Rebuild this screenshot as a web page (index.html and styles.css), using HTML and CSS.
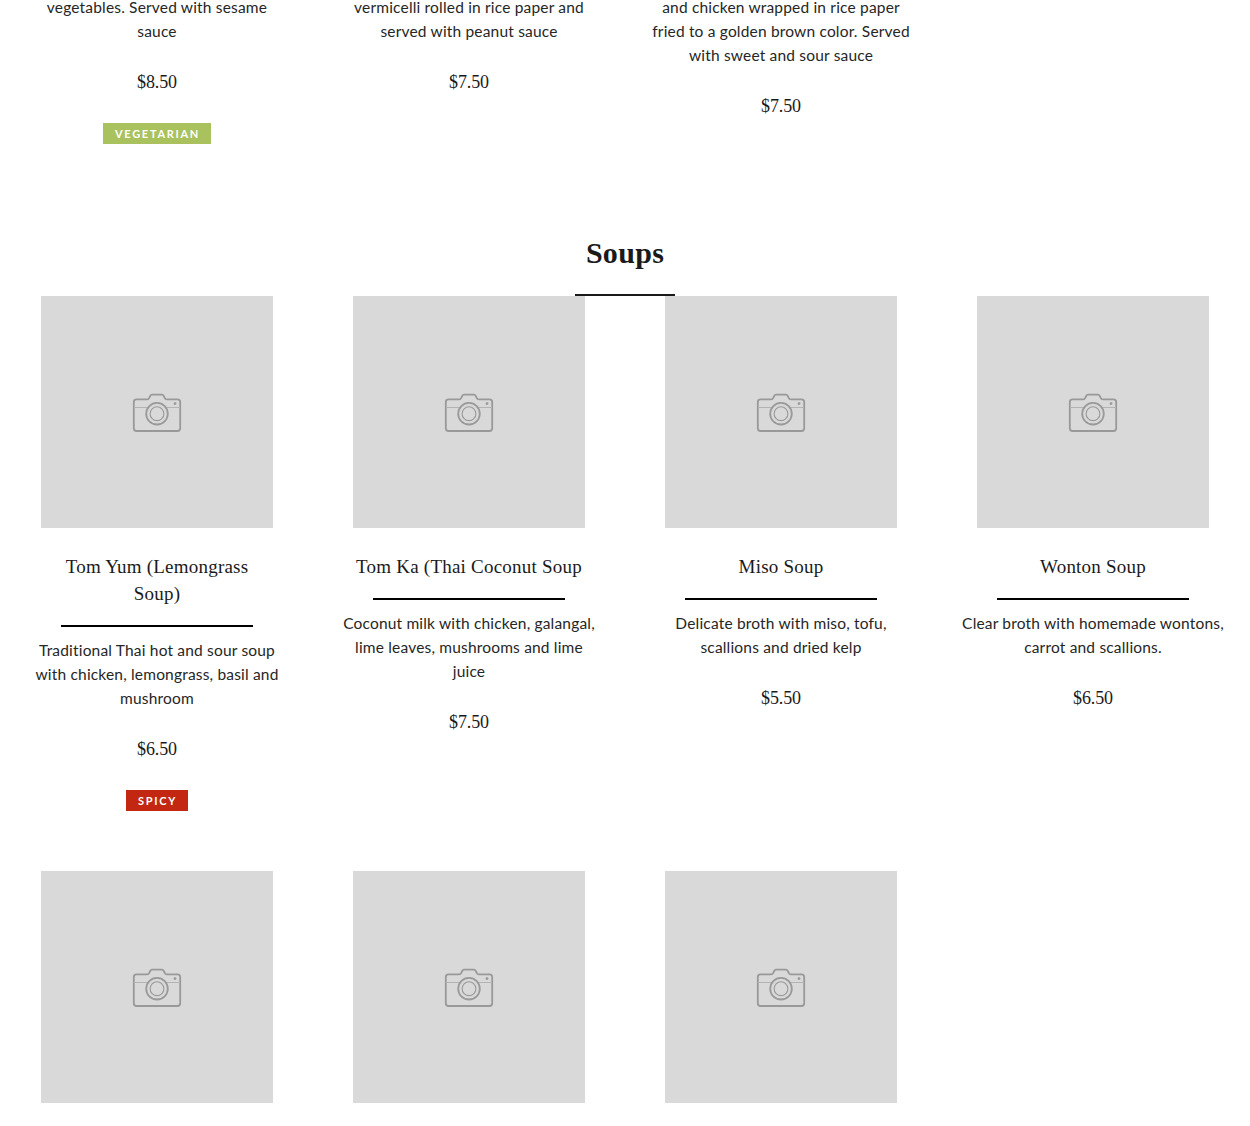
FILE: index.html
```
<!DOCTYPE html>
<html lang="en">

<head>
    <meta charset="UTF-8">
    <meta name="viewport" content="width=device-width, initial-scale=1.0">
    <title>Menu</title>
    <link rel="stylesheet" href="styles.css">
</head>

<body>
    <!-- camera placeholder, reused by every item without a photo -->
    <svg class="sprite" width="0" height="0">
        <symbol id="camera" viewBox="0 0 50 40">
            <g fill="none" stroke="#999">
                <path stroke-width="1.8" stroke-linejoin="round" d="M4.5 6.4H15.2Q16.6 6.4 17.2 5L18.3 2.8Q18.9 1.7 20 1.7H30Q31.1 1.7 31.7 2.8L32.8 5Q33.4 6.4 34.8 6.4H45.5Q48.2 6.4 48.2 9.1V35.3Q48.2 38 45.5 38H4.5Q1.8 38 1.8 35.3V9.1Q1.8 6.4 4.5 6.4Z" />
                <path stroke="#b3b3b3" d="M2 14.5H16.5M33.5 14.5H48" />
                <circle cx="25" cy="20.7" r="10.8" stroke-width="1.8" />
                <circle cx="25" cy="20.7" r="6.9" stroke-width="1.1" />
            </g>
            <circle cx="43" cy="10.6" r="1.4" fill="#999" />
        </symbol>
    </svg>

    <div class="menu">
        <div class="row first">
            <div class="item">
                <p class="desc">vegetables. Served with sesame<br>sauce</p>
                <div class="price">$8.50</div>
                <span class="tag vegetarian">VEGETARIAN</span>
            </div>
            <div class="item">
                <p class="desc">vermicelli rolled in rice paper and<br>served with peanut sauce</p>
                <div class="price">$7.50</div>
            </div>
            <div class="item">
                <p class="desc">and chicken wrapped in rice paper<br>fried to a golden brown color. Served<br>with sweet and sour sauce</p>
                <div class="price">$7.50</div>
            </div>
        </div>

        <h2 class="heading">Soups</h2>

        <div class="row">
            <div class="item">
                <div class="photo"><svg class="camera"><use href="#camera" /></svg></div>
                <h3 class="name">Tom Yum (Lemongrass<br>Soup)</h3>
                <p class="desc">Traditional Thai hot and sour soup<br>with chicken, lemongrass, basil and<br>mushroom</p>
                <div class="price">$6.50</div>
                <span class="tag spicy">SPICY</span>
            </div>
            <div class="item">
                <div class="photo"><svg class="camera"><use href="#camera" /></svg></div>
                <h3 class="name">Tom Ka (Thai Coconut Soup</h3>
                <p class="desc">Coconut milk with chicken, galangal,<br>lime leaves, mushrooms and lime<br>juice</p>
                <div class="price">$7.50</div>
            </div>
            <div class="item">
                <div class="photo"><svg class="camera"><use href="#camera" /></svg></div>
                <h3 class="name">Miso Soup</h3>
                <p class="desc">Delicate broth with miso, tofu,<br>scallions and dried kelp</p>
                <div class="price">$5.50</div>
            </div>
            <div class="item">
                <div class="photo"><svg class="camera"><use href="#camera" /></svg></div>
                <h3 class="name">Wonton Soup</h3>
                <p class="desc">Clear broth with homemade wontons,<br>carrot and scallions.</p>
                <div class="price">$6.50</div>
            </div>
        </div>

        <div class="row">
            <div class="item">
                <div class="photo"><svg class="camera"><use href="#camera" /></svg></div>
            </div>
            <div class="item">
                <div class="photo"><svg class="camera"><use href="#camera" /></svg></div>
            </div>
            <div class="item">
                <div class="photo"><svg class="camera"><use href="#camera" /></svg></div>
            </div>
        </div>
    </div>
</body>

</html>
```
FILE: styles.css
```
* {
    margin: 0;
    padding: 0;
    box-sizing: border-box;
}

body {
    background-color: #fff;
    color: #1a1a1a;
    font-family: Lato, sans-serif;
    overflow: hidden;
}

.sprite {
    display: block;
}

.menu {
    height: 1126px;
    padding: 0 1px;
    overflow: hidden;
}

.row {
    display: grid;
    grid-template-columns: repeat(4, 312px);
    margin-bottom: 60px;
}

.row.first {
    margin-top: -5px;
    margin-bottom: 89px;
}

.item {
    display: flex;
    flex-direction: column;
    align-items: center;
    text-align: center;
    white-space: nowrap;
}

.photo {
    display: flex;
    align-items: center;
    justify-content: center;
    width: 232px;
    height: 232px;
    padding-top: 2px;
    background-color: #d9d9d9;
}

.camera {
    width: 50px;
    height: 40px;
}

.name {
    width: 192px;
    display: flex;
    flex-direction: column;
    align-items: center;
    margin-top: 25px;
    padding-bottom: 18px;
    border-bottom: 2px solid #000;
    font-family: "Liberation Serif", serif;
    font-size: 19px;
    font-weight: normal;
    line-height: 27px;
    letter-spacing: 0.22px;
}

.name + .desc {
    margin-top: 11px;
}

.desc {
    color: #262626;
    font-size: 15.5px;
    line-height: 24px;
    letter-spacing: 0.18px;
}

.price {
    margin-top: 26px;
    font-family: "Liberation Serif", serif;
    font-size: 18px;
    line-height: 27px;
    letter-spacing: -0.1px;
}

.tag {
    margin-top: 27px;
    padding: 0 11px 0 12px;
    color: #fff;
    font-size: 11px;
    font-weight: bold;
    line-height: 21px;
    letter-spacing: 1.7px;
}

.vegetarian {
    background-color: #a9c25d;
}

.spicy {
    background-color: #c32711;
}

.heading {
    width: 100px;
    margin: 0 auto;
    padding-bottom: 21px;
    border-bottom: 2px solid #1a1a1a;
    font-family: "Liberation Serif", serif;
    font-size: 30px;
    line-height: 40px;
    letter-spacing: 0.3px;
    text-align: center;
}
```
